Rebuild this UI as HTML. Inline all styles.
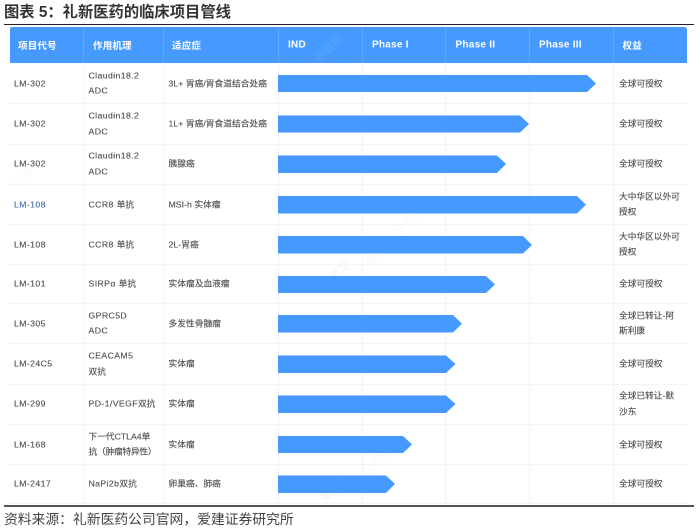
<!DOCTYPE html>
<html lang="zh"><head><meta charset="utf-8"><title>礼新医药的临床项目管线</title>
<style>
html,body{margin:0;padding:0;background:#fff}
#p{position:relative;width:700px;height:530px;overflow:hidden;background:#fff;font-family:"Liberation Sans","Noto Sans CJK SC",sans-serif;filter:blur(.35px)}
#p div{position:absolute}
.h{top:44.7px;transform:translateY(-50%);color:#fff;font-weight:bold;font-size:9.5px;white-space:nowrap;letter-spacing:.2px}
.l{font-size:10px;letter-spacing:.25px}
.t{transform:translateY(-50%);font-size:8.7px;line-height:15.5px;color:#4c4c4c;white-space:nowrap;letter-spacing:.4px;-webkit-text-stroke:.12px #4c4c4c}
.t span{letter-spacing:0}
.t span.n{letter-spacing:-.2px}
.a{left:14px}.b{left:88.5px}.c{left:168.5px;letter-spacing:.05px}.d{left:619px;letter-spacing:0}
.v{width:1px;background:#f3f4f6}
.hv{top:27px;height:36px;width:1px;background:#62a8ff}
.r{left:10px;width:677px;height:1px;background:#f3f4f6}
.w{color:#f2f4f7;font-size:11px;transform:rotate(-45deg);white-space:nowrap;font-family:"Liberation Serif","Noto Sans CJK SC",serif}
</style></head><body><div id="p">
<div style="left:4px;top:2px;font-size:15.3px;line-height:21px;font-weight:bold;color:#333;white-space:nowrap">图表 5：礼新医药的临床项目管线</div>
<div style="left:4px;top:24px;width:690px;height:1px;background:#222"></div>
<div style="left:10px;top:27px;width:677px;height:36px;background:#469aff;border-radius:2px 3px 0 0"></div>
<div class="hv" style="left:83px"></div><div class="hv" style="left:163px"></div><div class="hv" style="left:278px"></div><div class="hv" style="left:362px"></div><div class="hv" style="left:445px"></div><div class="hv" style="left:529px"></div><div class="hv" style="left:613px"></div>
<div class="h" style="left:18px">项目代号</div><div class="h" style="left:93px">作用机理</div><div class="h" style="left:172px">适应症</div><div class="h l" style="left:288px">IND</div><div class="h l" style="left:372px">Phase I</div><div class="h l" style="left:455.5px">Phase II</div><div class="h l" style="left:539px">Phase III</div><div class="h" style="left:622.5px">权益</div>

<div class="v" style="left:83px;top:63px;height:440px"></div><div class="v" style="left:163px;top:63px;height:440px"></div><div class="v" style="left:278px;top:63px;height:440px"></div><div class="v" style="left:362px;top:63px;height:440px"></div><div class="v" style="left:445px;top:63px;height:440px"></div><div class="v" style="left:529px;top:63px;height:440px"></div><div class="v" style="left:613px;top:63px;height:440px"></div>
<div class="r" style="top:103px"></div><div class="r" style="top:144px"></div><div class="r" style="top:184px"></div><div class="r" style="top:224px"></div><div class="r" style="top:264px"></div><div class="r" style="top:303px"></div><div class="r" style="top:343px"></div><div class="r" style="top:384px"></div><div class="r" style="top:424px"></div><div class="r" style="top:464px"></div><div class="r" style="top:503px"></div>

<div class="w" style="left:10px;top:172px">11:30</div>
<div class="w" style="left:312px;top:40px;color:rgba(255,255,255,.1)">张智超</div>
<div class="w" style="left:350px;top:215px;width:120px">2025-07-21 11:30</div>
<div class="w" style="left:320px;top:265px">张智超</div>
<div class="w" style="left:335px;top:440px;width:120px">2025-07-21 11:30</div>
<div class="w" style="left:318px;top:480px">张智超</div>

<svg width="700" height="530" style="position:absolute;left:0;top:0" fill="#469aff">
<polygon points="278,75 587,75 596,83.5 587,92 278,92"/>
<polygon points="278,115.5 520,115.5 529,124 520,132.5 278,132.5"/>
<polygon points="278,155.5 497,155.5 506,164 497,173 278,173"/>
<polygon points="278,196 577,196 586,204.7 577,213.5 278,213.5"/>
<polygon points="278,236 523,236 532,245 523,253.5 278,253.5"/>
<polygon points="278,276 486,276 495,284.5 486,293 278,293"/>
<polygon points="278,315 453,315 462,323.7 453,332.5 278,332.5"/>
<polygon points="278,355.5 446,355.5 455.5,364 446,373 278,373"/>
<polygon points="278,395.5 446,395.5 455.5,404 446,413 278,413"/>
<polygon points="278,436 403,436 412,444.5 403,453 278,453"/>
<polygon points="278,475.5 386,475.5 395,484 386,493 278,493"/>
</svg>

<div class="t a" style="top:83.5px">LM-302</div><div class="t b" style="top:83.5px">Claudin18.2<br>ADC</div><div class="t c" style="top:83.5px">3L+ 胃癌/胃食道结合处癌</div><div class="t d" style="top:83.5px">全球可授权</div>
<div class="t a" style="top:124px">LM-302</div><div class="t b" style="top:124px">Claudin18.2<br>ADC</div><div class="t c" style="top:124px">1L+ 胃癌/胃食道结合处癌</div><div class="t d" style="top:124px">全球可授权</div>
<div class="t a" style="top:164px">LM-302</div><div class="t b" style="top:164px">Claudin18.2<br>ADC</div><div class="t c" style="top:164px">胰腺癌</div><div class="t d" style="top:164px">全球可授权</div>
<div class="t a" style="top:204.5px;color:#3d6fa8;-webkit-text-stroke-color:#3d6fa8">LM-108</div><div class="t b" style="top:204.5px">CCR8 <span>单抗</span></div><div class="t c" style="top:204.5px">MSI-h 实体瘤</div><div class="t d" style="top:204.5px">大中华区以外可<br>授权</div>
<div class="t a" style="top:244.5px">LM-108</div><div class="t b" style="top:244.5px">CCR8 <span>单抗</span></div><div class="t c" style="top:244.5px">2L-胃癌</div><div class="t d" style="top:244.5px">大中华区以外可<br>授权</div>
<div class="t a" style="top:284px">LM-101</div><div class="t b" style="top:284px">SIRPα <span>单抗</span></div><div class="t c" style="top:284px">实体瘤及血液瘤</div><div class="t d" style="top:284px">全球可授权</div>
<div class="t a" style="top:323.5px">LM-305</div><div class="t b" style="top:323.5px">GPRC5D<br>ADC</div><div class="t c" style="top:323.5px">多发性骨髓瘤</div><div class="t d" style="top:323.5px">全球已转让-阿<br>斯利康</div>
<div class="t a" style="top:364px">LM-24C5</div><div class="t b" style="top:364px">CEACAM5<br><span>双抗</span></div><div class="t c" style="top:364px">实体瘤</div><div class="t d" style="top:364px">全球可授权</div>
<div class="t a" style="top:404px">LM-299</div><div class="t b" style="top:404px">PD-1/VEGF<span>双抗</span></div><div class="t c" style="top:404px">实体瘤</div><div class="t d" style="top:404px">全球已转让-默<br>沙东</div>
<div class="t a" style="top:444.5px">LM-168</div><div class="t b" style="top:444.5px"><span>下一代CTLA4单</span><br><span class="n">抗（肿瘤特异性）</span></div><div class="t c" style="top:444.5px">实体瘤</div><div class="t d" style="top:444.5px">全球可授权</div>
<div class="t a" style="top:484px">LM-2417</div><div class="t b" style="top:484px">NaPi2b<span>双抗</span></div><div class="t c" style="top:484px">卵巢癌、肺癌</div><div class="t d" style="top:484px">全球可授权</div>

<div style="left:4px;top:505px;width:690px;height:2px;background:#555"></div>
<div style="left:4px;top:510px;font-size:13.8px;line-height:20px;color:#444;white-space:nowrap">资料来源：礼新医药公司官网，爱建证券研究所</div>
</div></body></html>
